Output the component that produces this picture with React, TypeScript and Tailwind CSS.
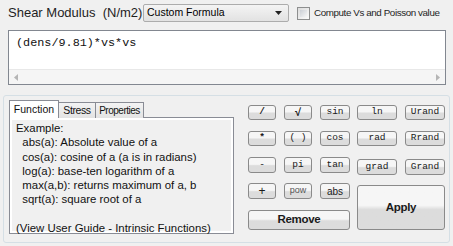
import React from 'react';

const sans = { fontFamily: '"Liberation Sans", Arial, sans-serif' };

const Btn = ({ label, className = '', mono = true }: { label: string; className?: string; mono?: boolean }) => (
  <div
    className={`flex items-center justify-center rounded-[3px] border border-[#8a8a8a] bg-gradient-to-b from-[#f6f6f6] from-45% to-[#dcdcdc] to-55% text-[#1a1a1a] ${
      mono ? "font-['Liberation_Mono',monospace] text-[9.5px]" : ''
    } ${className}`}
  >
    {label}
  </div>
);

const lines = [
  'Example:',
  '  abs(a): Absolute value of a',
  '  cos(a): cosine of a (a is in radians)',
  '  log(a): base-ten logarithm of a',
  '  max(a,b): returns maximum of a, b',
  '  sqrt(a): square root of a',
  ' ',
  '(View User Guide - Intrinsic Functions)',
];

export default function App() {
  return (
    <div className="relative h-[246px] w-[453px] overflow-hidden bg-[#f0f0f0] text-black" style={sans}>
      {/* header row */}
      <div className="flex h-[30px] items-center pb-[4px] pl-[8px]">
        <span className="w-[135px] whitespace-pre text-[13px] text-[#1e1e1e]">Shear Modulus  (N/m2) =</span>
        <div className="relative flex h-[18px] w-[146px] items-center rounded-[2px] border border-[#acacac] bg-gradient-to-b from-[#f4f4f4] to-[#e2e2e2] pl-[3px] text-[10.5px]">
          Custom Formula
          <svg className="absolute right-[6px] top-[6px]" width="7" height="4" viewBox="0 0 7 4">
            <path d="M0 0h7L3.5 4z" fill="#222" />
          </svg>
        </div>
        <div className="ml-[8px] h-[13px] w-[13px] shrink-0 border border-[#8e8f8f] bg-gradient-to-br from-[#dcdcdc] to-[#fbfbfb] p-[2px]">
          <div className="h-full w-full bg-gradient-to-br from-[#cbcfd5] to-[#f6f6f6]" />
        </div>
        <span className="ml-[4px] whitespace-nowrap text-[9.8px] tracking-[-0.4px] text-[#1e1e1e]">
          Compute Vs and Poisson value
        </span>
      </div>

      {/* formula box */}
      <div className="ml-[8px] flex h-[55px] w-[438px] flex-col border border-[#828790] bg-white">
        <div className="flex-1 pl-[7px] pt-[4px] font-['Liberation_Mono',monospace] text-[11.8px] text-[#111]">
          (dens/9.81)*vs*vs
        </div>
        <div className="flex h-[15px] items-center justify-between border-t border-[#e8e8e8] bg-[#f5f5f5] px-[5px]">
          <svg width="4" height="7" viewBox="0 0 4 7">
            <path d="M4 0v7L0 3.5z" fill="#b5b5b5" />
          </svg>
          <svg width="4" height="7" viewBox="0 0 4 7">
            <path d="M0 0v7l4-3.5z" fill="#b5b5b5" />
          </svg>
        </div>
      </div>

      {/* group box */}
      <div className="ml-[3px] mt-[10px] flex h-[148px] w-[447px] rounded-[3px] border border-[#d5dfe5] pl-[5px] pt-[4px]">
        {/* tabs */}
        <div className="flex w-[225px] flex-col">
          <div className="relative z-10 flex h-[18px] items-end text-[10.5px] text-[#111]">
            <div className="flex h-[18px] w-[50px] items-center justify-center border border-b-0 border-[#898c95] bg-white">
              Function
            </div>
            <div className="flex h-[16px] w-[37px] items-center justify-center border border-b-0 border-l-0 border-[#898c95] bg-gradient-to-b from-[#f3f3f3] to-[#e3e3e3] tracking-[-0.4px]">
              Stress
            </div>
            <div className="flex h-[16px] w-[48px] items-center justify-center border border-b-0 border-l-0 border-[#898c95] bg-gradient-to-b from-[#f3f3f3] to-[#e3e3e3] text-[10px] tracking-[-0.5px]">
              Properties
            </div>
          </div>
          <div className="-mt-px h-[117px] border border-[#898c95] bg-white p-[2px]">
            <div className="h-full bg-[#f0f0f0] pl-[4px] pt-[1px] text-[11.4px] leading-[14.3px] text-[#111]">
              {lines.map((l, i) => (
                <div key={i} className="whitespace-pre">
                  {l}
                </div>
              ))}
            </div>
          </div>
        </div>

        {/* buttons */}
        <div className="ml-[14px] flex pt-[5px]">
          <div className="flex w-[102px] flex-col">
            <div className="flex gap-[8px]">
              <Btn label="/" className="h-[15px] w-[28px] font-bold" />
              <Btn label="√" className="h-[15px] w-[28px] !text-[11px] font-bold" mono={false} />
              <Btn label="sin" className="h-[15px] w-[30px]" />
            </div>
            <div className="mt-[11px] flex gap-[8px]">
              <Btn label="*" className="h-[15px] w-[28px] font-bold" />
              <Btn label="( )" className="h-[15px] w-[28px]" />
              <Btn label="cos" className="h-[15px] w-[30px]" />
            </div>
            <div className="mt-[11px] flex gap-[8px]">
              <Btn label="-" className="h-[16px] w-[28px]" />
              <Btn label="pi" className="h-[16px] w-[28px]" />
              <Btn label="tan" className="h-[16px] w-[30px]" />
            </div>
            <div className="mt-[10px] flex gap-[8px]">
              <Btn label="+" className="h-[16px] w-[28px] text-[12px]" mono={false} />
              <Btn label="pow" className="h-[16px] w-[28px] text-[9px] text-[#555]" mono={false} />
              <Btn label="abs" className="h-[16px] w-[30px] text-[10px]" mono={false} />
            </div>
            <Btn label="Remove" className="mt-[11px] h-[20px] w-[102px] text-[11.5px] font-bold tracking-[-0.3px]" mono={false} />
          </div>
          <div className="ml-[7px] flex w-[88px] flex-col">
            <div className="flex gap-[8px]">
              <Btn label="ln" className="h-[15px] w-[40px]" />
              <Btn label="Urand" className="h-[15px] w-[40px]" />
            </div>
            <div className="mt-[11px] flex gap-[8px]">
              <Btn label="rad" className="h-[15px] w-[40px]" />
              <Btn label="Rrand" className="h-[15px] w-[40px]" />
            </div>
            <div className="mt-[13px] flex gap-[8px]">
              <Btn label="grad" className="h-[16px] w-[40px]" />
              <Btn label="Grand" className="h-[16px] w-[40px]" />
            </div>
            <Btn label="Apply" className="mt-[10px] h-[45px] w-[88px] text-[11.5px] font-bold tracking-[-0.3px]" mono={false} />
          </div>
        </div>
      </div>
    </div>
  );
}
